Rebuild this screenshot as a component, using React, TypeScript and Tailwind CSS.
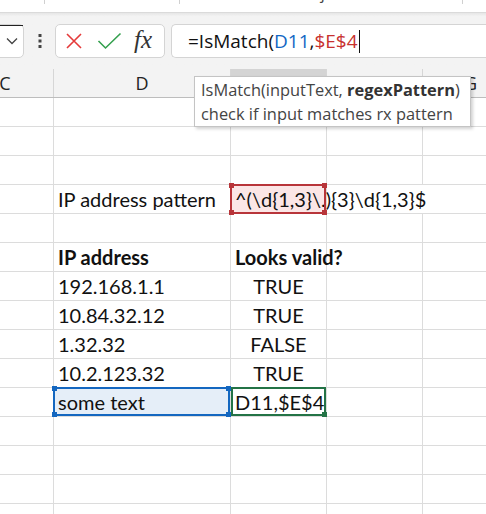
import React from "react";

const ui = { fontFamily: '"Open Sans", "Noto Sans", sans-serif' };
const cellFont = { fontFamily: 'Lato, "Liberation Sans", sans-serif' };

type Row = { d?: React.ReactNode; e?: React.ReactNode; kind?: "pattern" | "active" | "bold" };

const rows: Row[] = [
  {},
  {},
  {},
  { d: "IP address pattern", kind: "pattern" },
  {},
  { d: "IP address", e: "Looks valid?", kind: "bold" },
  { d: "192.168.1.1", e: "TRUE" },
  { d: "10.84.32.12", e: "TRUE" },
  { d: "1.32.32", e: "FALSE" },
  { d: "10.2.123.32", e: "TRUE" },
  { d: "some text", e: "D11,$E$4", kind: "active" },
  {},
  {},
  {},
  {},
];

const Handles = ({ color }: { color: string }) => (
  <>
    <span className={`absolute -left-[3px] -top-[3px] h-[5px] w-[5px] ${color}`} />
    <span className={`absolute -right-[3px] -top-[3px] h-[5px] w-[5px] ${color}`} />
    <span className={`absolute -left-[3px] -bottom-[3px] h-[5px] w-[5px] ${color}`} />
    <span className={`absolute -right-[3px] -bottom-[3px] h-[5px] w-[5px] ${color}`} />
  </>
);

const cell = "h-[29px] border-b border-r border-[#dcdcdc] flex items-center";

function GridRow({ row }: { row: Row }) {
  const bold = row.kind === "bold" ? "font-bold" : "";
  return (
    <>
      <div className={cell} />
      <div className={`${cell} relative pl-[4px] whitespace-nowrap ${bold} ${row.kind === "active" ? "bg-[#e5eef8]" : ""}`}>
        {row.d}
        {row.kind === "active" && (
          <div className="absolute -left-px -top-px right-0 bottom-0 border-2 border-[#1467c0] z-10">
            <Handles color="bg-[#1467c0]" />
          </div>
        )}
      </div>
      <div
        className={`${cell} relative whitespace-nowrap ${row.kind === "bold" || row.kind === "pattern" || row.kind === "active" ? "pl-[4px]" : "justify-center"} ${bold} ${row.kind === "pattern" ? "bg-[#fbe6e6]" : ""}`}
      >
        {row.kind === "pattern" ? (
          <span className="whitespace-nowrap">{"^(\\d{1,3}\\.){3}\\d{1,3}$"}</span>
        ) : (
          row.e
        )}
        {row.kind === "pattern" && (
          <div className="absolute -left-px -top-px right-0 -bottom-px border-2 border-[#b8353a] z-10">
            <Handles color="bg-[#b8353a]" />
          </div>
        )}
        {row.kind === "active" && (
          <div className="absolute left-0 -top-px right-0 bottom-0 border-2 border-[#237346] z-10">
            <span className="absolute -right-[3px] -bottom-[3px] h-[5px] w-[5px] bg-[#237346]" />
          </div>
        )}
      </div>
      <div className={row.kind === "pattern" ? "h-[29px] border-b border-[#dcdcdc]" : cell} />
      <div className={cell} />
    </>
  );
}

export default function App() {
  return (
    <div className="relative w-[486px] h-[514px] overflow-hidden bg-white text-[#111]">
      {/* ribbon tabs, mostly scrolled away */}
      <div className="h-[12px] flex overflow-hidden text-[16px] text-[#444]" style={ui}>
        <div className="w-[45px] border-r border-[#d0d0d0] h-[4px]" />
        <div className="w-[135px] border-r border-[#d0d0d0] h-[4px] flex justify-center">
          <span className="-mt-[17px] leading-[20px]">File</span>
        </div>
        <div className="w-[283px] border-r border-[#d0d0d0] h-[4px] flex justify-center">
          <span className="-mt-[17px] leading-[20px]">Project</span>
        </div>
      </div>

      {/* formula bar */}
      <div className="h-[57px] bg-[#f3f3f3] border-t border-[#dadada] bg-gradient-to-b from-[#e6e6e6] via-[#f3f3f3] via-[6%] to-[#f3f3f3] pt-[11px] flex items-start">
        <div className="relative -ml-[10px] w-[34px] h-[34px] bg-white border border-[#d4d4d4] rounded-[5px] flex items-center justify-end pr-[5px]">
          <span className="absolute left-0 top-0 w-[32px] h-px bg-[#222]" />
          <svg width="12" height="8" viewBox="0 0 12 8">
            <path d="M1 1.5 L6 6.5 L11 1.5" fill="none" stroke="#444" strokeWidth="1.3" />
          </svg>
        </div>
        <div className="w-[31px] h-[34px] flex items-center justify-center">
          <svg width="4" height="14" viewBox="0 0 4 14">
            <rect x="0.5" y="0" width="3" height="3" fill="#444" />
            <rect x="0.5" y="5.5" width="3" height="3" fill="#444" />
            <rect x="0.5" y="11" width="3" height="3" fill="#444" />
          </svg>
        </div>
        <div className="w-[110px] h-[34px] bg-white border border-[#d4d4d4] rounded-[5px] flex items-center pl-[9px] gap-[14px]">
          <svg width="18" height="18" viewBox="0 0 18 18">
            <path d="M2 2 L16 16 M16 2 L2 16" stroke="#e53a3a" strokeWidth="1.6" fill="none" />
          </svg>
          <svg width="25" height="18" viewBox="0 0 25 18">
            <path d="M1.5 9 L8.5 16 L23.5 1.5" stroke="#34a04e" strokeWidth="1.6" fill="none" />
          </svg>
          <span
            className="italic text-[25px] leading-none text-[#333] -mt-[3px] -ml-[2px]"
            style={{ fontFamily: '"Liberation Serif", "DejaVu Serif", serif' }}
          >
            fx
          </span>
        </div>
        <div
          className="ml-[6px] flex-1 h-[34px] bg-white border border-r-0 border-[#d4d4d4] rounded-l-[5px] flex items-center pl-[16px] text-[19px] text-[#111]"
          style={ui}
        >
          <span>=IsMatch(</span>
          <span className="text-[#1167c4]">D11</span>
          <span>,</span>
          <span className="text-[#c8312f]">$E$4</span>
          <span className="ml-px w-px h-[23px] bg-[#111]" />
        </div>
      </div>

      {/* column headers */}
      <div
        className="-ml-[43px] grid grid-cols-[97px_177px_96px_96px_96px] h-[29px] bg-[#f3f3f3] border-b border-[#bdbdbd] text-[18px] text-[#222]"
        style={ui}
      >
        {["C", "D", "E", "F", "G"].map((c) => (
          <div
            key={c}
            className={`h-[28px] border-r border-[#d6d6d6] flex items-center justify-center ${c === "E" ? "bg-[#d4d4d4]" : ""}`}
          >
            {c}
          </div>
        ))}
      </div>

      {/* sheet */}
      <div className="-ml-[43px] grid grid-cols-[97px_177px_96px_96px_96px] text-[20px] text-[#111]" style={cellFont}>
        {rows.map((r, i) => (
          <GridRow key={i} row={r} />
        ))}
      </div>

      {/* function tooltip */}
      <div
        className="absolute left-[194px] top-[76px] w-[277px] h-[51px] bg-white border border-[#c4c4c4] shadow-[2px_2px_3px_rgba(0,0,0,0.18)] pl-[6px] pt-[1px] text-[16.4px] leading-[24px] text-[#444] z-20 whitespace-nowrap"
        style={ui}
      >
        <div>
          IsMatch(inputText, <span className="font-bold text-[#333]">regexPattern</span>)
        </div>
        <div>check if input matches rx pattern</div>
      </div>
    </div>
  );
}
